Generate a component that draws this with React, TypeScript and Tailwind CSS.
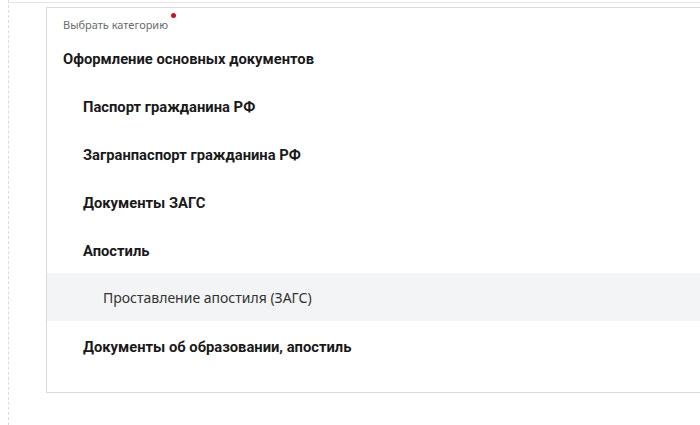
const rows: { label: string; level: number; active?: boolean }[] = [
  { label: 'Оформление основных документов', level: 0 },
  { label: 'Паспорт гражданина РФ', level: 1 },
  { label: 'Загранпаспорт гражданина РФ', level: 1 },
  { label: 'Документы ЗАГС', level: 1 },
  { label: 'Апостиль', level: 1 },
  { label: 'Проставление апостиля (ЗАГС)', level: 2, active: true },
  { label: 'Документы об образовании, апостиль', level: 1 },
];

export default function App() {
  return (
    <div
      className="relative h-[425px] w-[700px] overflow-hidden bg-white"
      style={{ fontFamily: "'Noto Sans', 'Open Sans', sans-serif" }}
    >
      {/* dashed guide on the left and thin line on top */}
      <div className="absolute left-[8px] top-0 h-full border-l border-dashed border-[#dcdcdc]" />
      <div className="absolute left-[10px] right-0 top-[2px] border-t border-[#e3e3e3]" />

      <div className="ml-[46px] mt-[7px] h-[386px] w-[700px] border border-[#dadada] bg-white">
        <div className="relative flex h-[24px] items-end pl-[16px] text-[11px] text-[#6b6b6b]">
          <span className="leading-[14px]">Выбрать категорию</span>
          <span className="absolute left-[124px] top-[5px] h-[5px] w-[5px] rounded-full bg-[#c8102e]" />
        </div>
        <ul className="mt-[1px]">
          {rows.map((r) => (
            <li
              key={r.label}
              className={`flex h-[48px] items-center ${
                r.active
                  ? 'bg-[#f3f4f5] text-[14px] font-normal text-[#333]'
                  : "pt-[5px] font-['Roboto'] text-[14.75px] font-bold text-[#1a1a1a]"
              } ${r.level === 0 ? 'pl-[16px]' : r.level === 1 ? 'pl-[36px]' : 'pl-[56px]'}`}
            >
              {r.label}
            </li>
          ))}
        </ul>
      </div>
    </div>
  );
}
